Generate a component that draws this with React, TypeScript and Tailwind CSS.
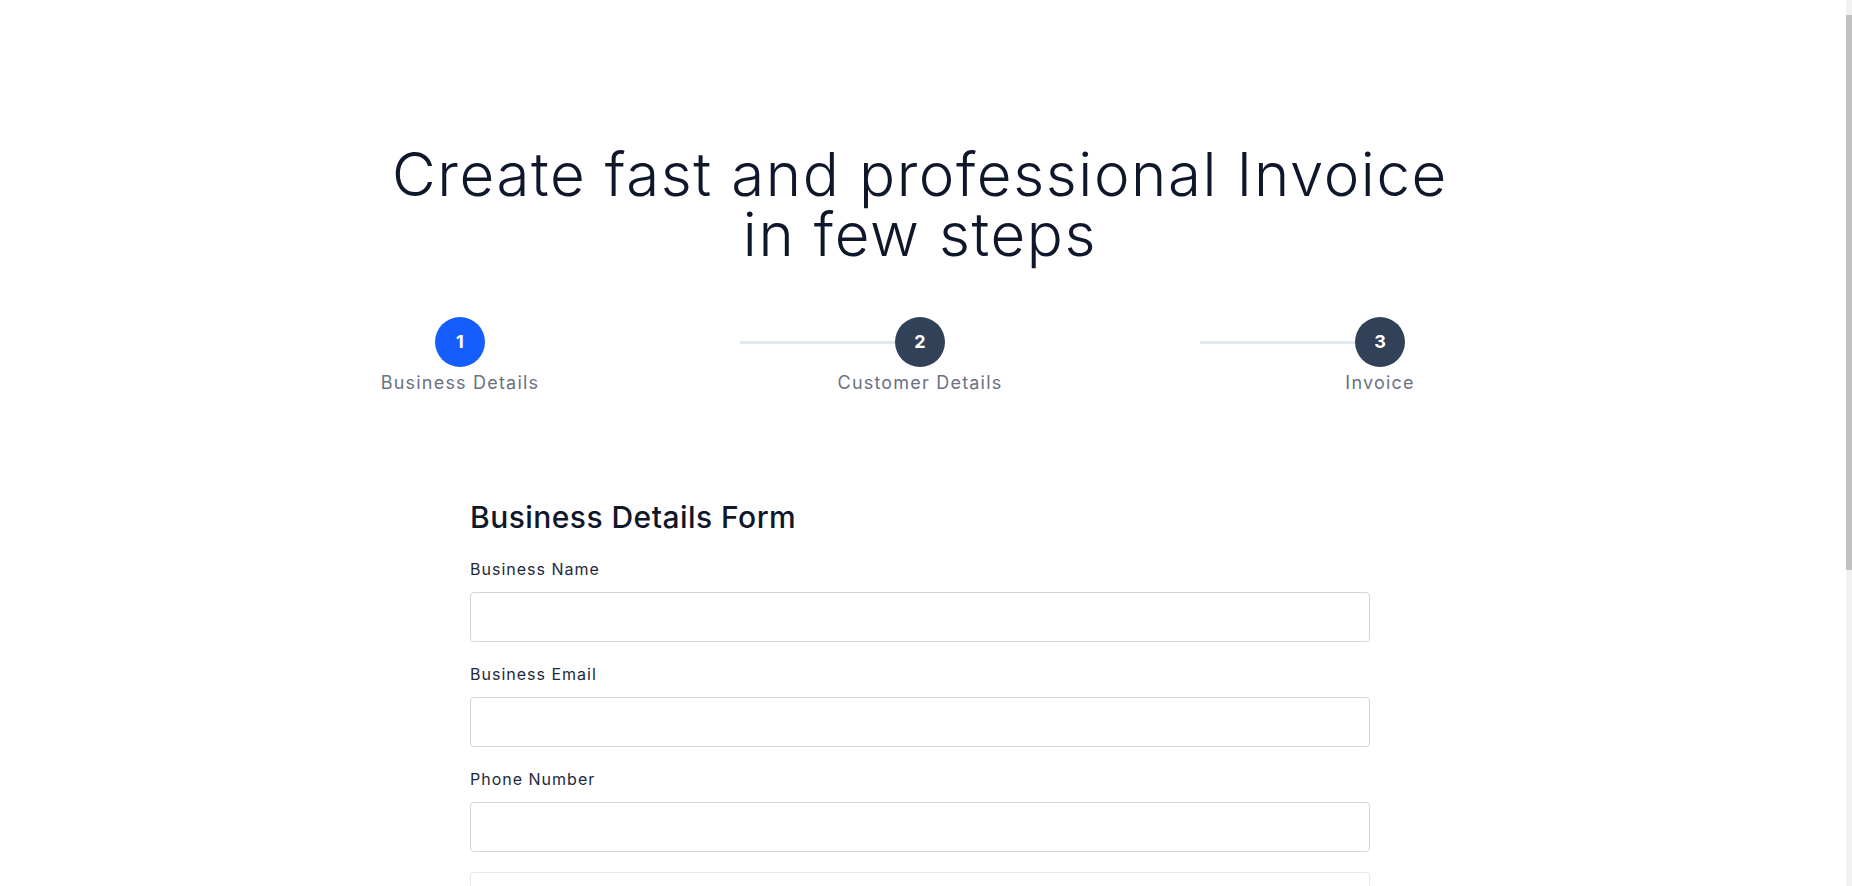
const steps = [
  { n: 1, label: 'Business Details', active: true },
  { n: 2, label: 'Customer Details', active: false },
  { n: 3, label: 'Invoice', active: false },
]

const fields = ['Business Name', 'Business Email', 'Phone Number']

export default function App() {
  return (
    <div className="flex h-screen bg-white font-['Inter',sans-serif] text-[#0f172a]">
      <main className="flex-1 overflow-hidden">
        <div className="flex flex-col items-center pr-1.5 pt-[144px] pb-[100px]">
          <h1 className="text-center text-6xl leading-none font-light tracking-[1.6px]">
            Create fast and professional Invoice
            <br />
            in few steps
          </h1>

          <ol className="mt-[53px] grid w-[1380px] grid-cols-3">
            {steps.map((s, i) => (
              <li key={s.n} className="flex flex-col items-center">
                <div className="grid w-full grid-cols-[1fr_auto_1fr] items-center">
                  {i > 0 ? <span className="ml-[50px] h-[3px] bg-slate-200" /> : <span />}
                  <span
                    className={`flex h-[50px] w-[50px] items-center justify-center rounded-full text-lg font-bold text-white ${
                      s.active ? 'bg-blue-600' : 'bg-slate-700'
                    }`}
                  >
                    {s.n}
                  </span>
                  <span />
                </div>
                <span className="mt-[2px] text-lg tracking-[1.2px] text-gray-500">{s.label}</span>
              </li>
            ))}
          </ol>

          <form className="mt-[102px] w-[900px]">
            <h2 className="text-3xl font-medium tracking-[0.45px]">Business Details Form</h2>

            <div className="mt-[22px] flex flex-col gap-5">
              {fields.map((f) => (
                <label key={f} className="flex flex-col">
                  <span className="mb-[11px] text-base leading-6 tracking-[1px] text-slate-800">{f}</span>
                  <input
                    type="text"
                    className="h-[50px] rounded border border-gray-300 px-3 outline-none"
                  />
                </label>
              ))}

              <textarea className="h-[200px] resize-none rounded border border-slate-200 px-3 py-3 outline-none" />

              <label className="flex flex-col">
                <span className="mb-[11px] text-base leading-6 tracking-[1px] text-slate-800">Business Address</span>
                <input type="text" className="h-[50px] rounded border border-gray-300 px-3 outline-none" />
              </label>
            </div>

            <div className="mt-8 flex justify-end">
              <button type="button" className="h-12 rounded bg-blue-600 px-8 font-medium text-white">
                Next
              </button>
            </div>
          </form>
        </div>
      </main>

      {/* scrollbar as drawn in the screenshot */}
      <div className="flex w-1.5 flex-col bg-[#f1f1f1]">
        <div className="mt-[15px] h-[555px] bg-[#c1c1c1]" />
      </div>
    </div>
  )
}
